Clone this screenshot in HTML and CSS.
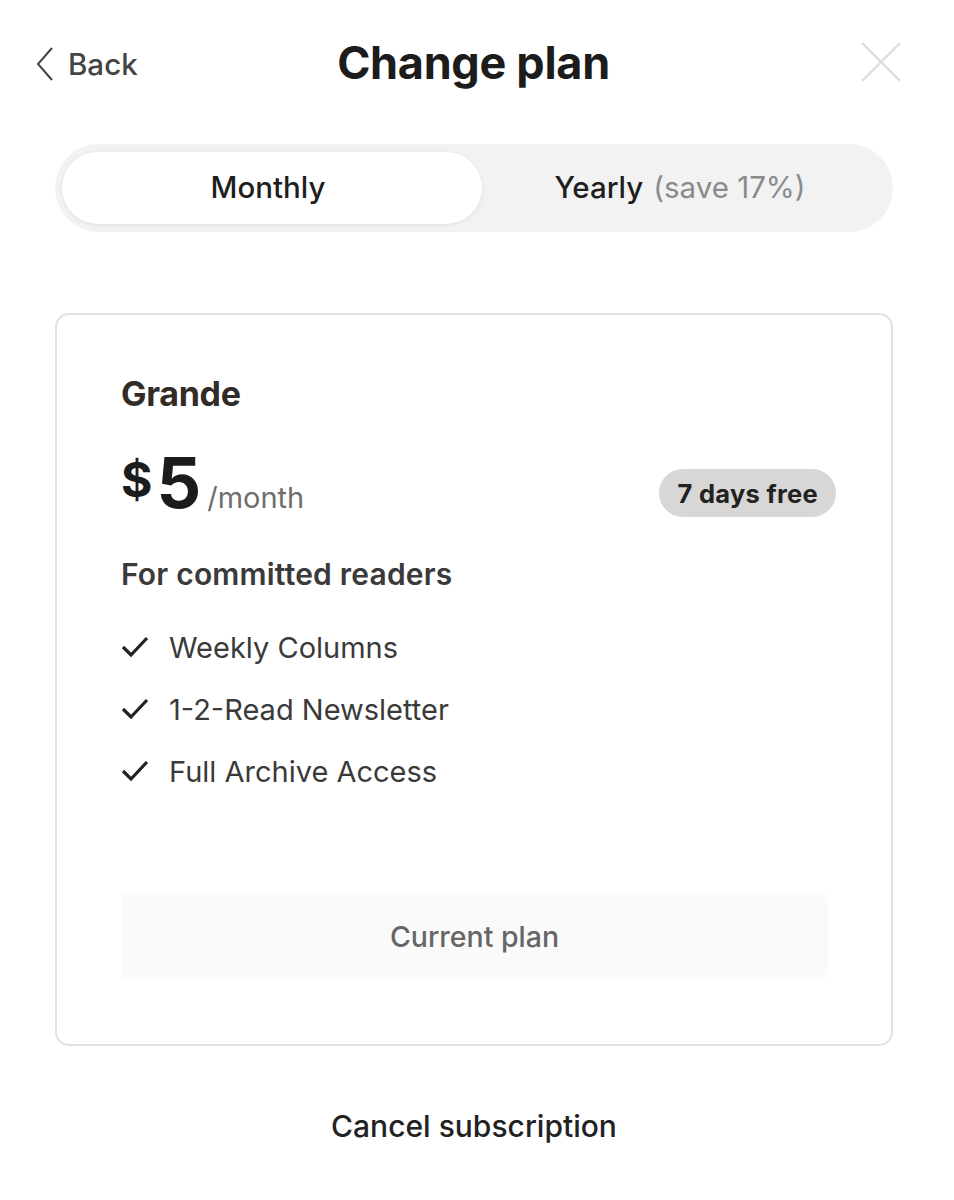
FILE: index.html
```html
<!DOCTYPE html>
<html lang="en">
<head>
<meta charset="utf-8">
<title>Change plan</title>
<link rel="stylesheet" href="styles.css">
</head>
<body>
<div class="page">
  <header class="header">
    <a class="back" href="#">
      <svg class="back-icon" viewBox="0 0 18 34" width="18" height="34"><path d="M16 1 L2 17 L16 33" fill="none" stroke="#444" stroke-width="2"/></svg>
      <span>Back</span>
    </a>
    <h1 class="title">Change plan</h1>
    <button class="close" aria-label="Close">
      <svg viewBox="0 0 40 40" width="40" height="40"><path d="M1 1 L39 39 M39 1 L1 39" stroke="#dcdcdc" stroke-width="2.2"/></svg>
    </button>
  </header>

  <div class="toggle">
    <div class="toggle-opt active">Monthly</div>
    <div class="toggle-opt yearly">Yearly <span class="save">(save 17%)</span></div>
  </div>

  <section class="card">
    <h2 class="plan-name">Grande</h2>
    <div class="price-row">
      <div class="price">
        <span class="cur">$</span><span class="amt">5</span><span class="per">/month</span>
      </div>
      <span class="badge">7 days free</span>
    </div>
    <p class="tagline">For committed readers</p>
    <ul class="features">
      <li><svg class="check" viewBox="0 0 28 22" width="28" height="22"><path d="M2 11 L10 19 L26 2" fill="none" stroke="#222" stroke-width="3.2"/></svg>Weekly Columns</li>
      <li><svg class="check" viewBox="0 0 28 22" width="28" height="22"><path d="M2 11 L10 19 L26 2" fill="none" stroke="#222" stroke-width="3.2"/></svg>1-2-Read Newsletter</li>
      <li><svg class="check" viewBox="0 0 28 22" width="28" height="22"><path d="M2 11 L10 19 L26 2" fill="none" stroke="#222" stroke-width="3.2"/></svg>Full Archive Access</li>
    </ul>
    <button class="current">Current plan</button>
  </section>

  <a class="cancel" href="#">Cancel subscription</a>
</div>
</body>
</html>
```

FILE: styles.css
```css
* { box-sizing: border-box; }
html, body { margin: 0; padding: 0; background: #fff; }
body {
  font-family: Inter, "Noto Sans", "Liberation Sans", sans-serif;
  color: #222;
}
.page {
  width: 954px;
  padding: 0 61px 40px 55px;
  display: flex;
  flex-direction: column;
}
.header {
  height: 128px;
  display: grid;
  grid-template-columns: 1fr auto 1fr;
  align-items: center;
  margin: 0 -8px 0 -19px;
  padding-bottom: 4px;
}
.back {
  display: flex;
  align-items: center;
  gap: 14px;
  color: #444;
  text-decoration: none;
  font-size: 29.5px;
  font-weight: 500;
  justify-self: start;
  margin-top: 4px;
}
.back-icon { display: block; }
.title {
  margin: 0 0 0 10px;
  font-size: 45px;
  font-weight: 700;
  letter-spacing: -0.3px;
  color: #1c1c1c;
  text-align: center;
}
.close {
  justify-self: end;
  background: none;
  border: 0;
  padding: 0;
  width: 40px;
  height: 40px;
}
.close svg { display: block; }

.toggle {
  margin-top: 16px;
  height: 88px;
  background: #f2f2f2;
  border-radius: 44px;
  padding: 8px 7px;
  display: grid;
  grid-template-columns: 420px 1fr;
}
.toggle-opt {
  display: flex;
  align-items: center;
  justify-content: center;
  font-size: 29.5px;
  font-weight: 500;
  color: #1e1e1e;
  border-radius: 36px;
  padding-bottom: 2px;
}
.toggle-opt.active {
  background: #fff;
  box-shadow: 0 1px 4px rgba(0,0,0,0.08);
  padding-right: 8px;
}
.toggle-opt.yearly { padding-right: 8px; }
.save { color: #8a8a8a; font-weight: 400; margin-left: 10px; }

.card {
  margin-top: 81px;
  border: 2px solid #e2e2e2;
  border-radius: 14px;
  padding: 58px 63px 65px 64px;
  display: flex;
  flex-direction: column;
}
.plan-name {
  margin: 0;
  font-size: 34px;
  font-weight: 700;
  color: #332b26;
  letter-spacing: -0.3px;
}
.price-row {
  margin-top: 34px;
  display: flex;
  align-items: center;
  justify-content: space-between;
}
.price {
  display: flex;
  align-items: baseline;
  color: #1c1c1c;
}
.cur { font-size: 48px; font-weight: 700; align-self: flex-start; margin-top: 2px; }
.amt { font-size: 70px; font-weight: 700; line-height: 1; margin-left: 4px; }
.per { font-size: 29px; color: #6e6e6e; margin-left: 6px; }
.badge {
  background: #d8d7d5;
  border-radius: 24px;
  height: 48px;
  padding: 0 18px;
  display: flex;
  align-items: center;
  font-size: 25.5px;
  font-weight: 700;
  color: #222;
  letter-spacing: 0.3px;
  margin-right: -8px;
  margin-top: 20px;
}
.tagline {
  margin: 38px 0 0;
  font-size: 30px;
  font-weight: 600;
  color: #3a3a3a;
  letter-spacing: 0.2px;
}
.features {
  list-style: none;
  margin: 37px 0 0;
  padding: 0;
  display: flex;
  flex-direction: column;
  gap: 26px;
}
.features li {
  display: flex;
  align-items: center;
  gap: 20px;
  font-size: 29px;
  color: #3a3a3a;
  height: 36px;
}
.check { display: block; }
.current {
  margin-top: 104px;
  height: 86px;
  border: 0;
  border-radius: 8px;
  background: #fafafa;
  font-family: inherit;
  font-size: 28.5px;
  font-weight: 500;
  color: #666;
}
.cancel {
  margin-top: 62px;
  align-self: center;
  font-size: 30px;
  font-weight: 500;
  color: #222;
  text-decoration: none;
}
```
